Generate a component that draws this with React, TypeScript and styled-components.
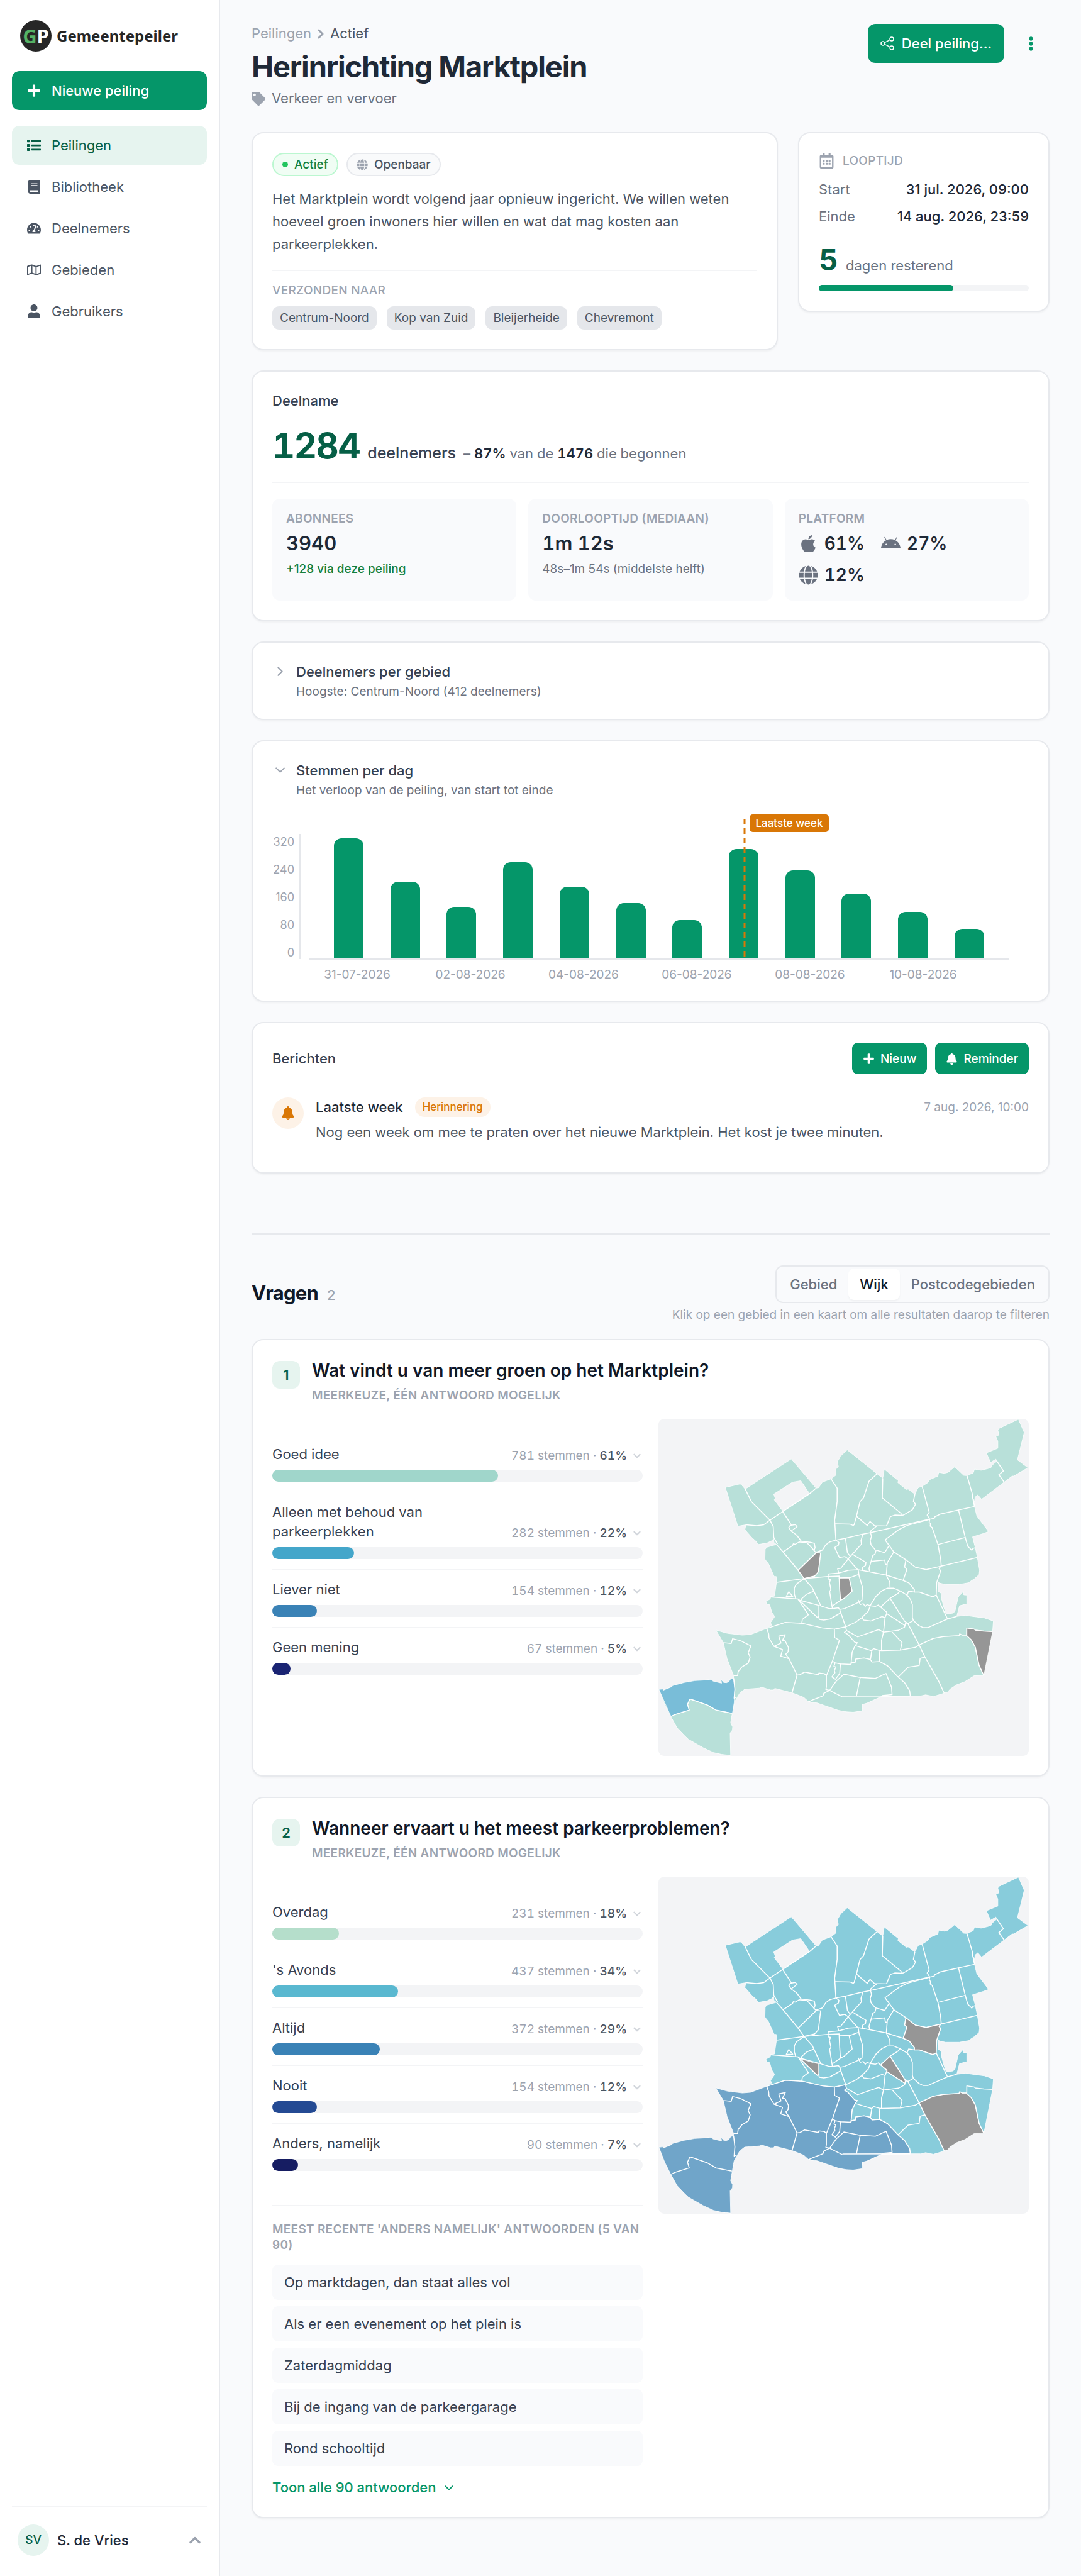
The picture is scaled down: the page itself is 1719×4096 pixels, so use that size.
import React, { useState } from "react";
import styled, { createGlobalStyle } from "styled-components";
import {
  FaPlus, FaList, FaBook, FaTachometerAlt, FaRegMap, FaUser, FaTag, FaGlobe,
  FaApple, FaAndroid, FaBell, FaRegCalendarAlt, FaEllipsisV,
} from "react-icons/fa";
import { ChevronRight, ChevronDown, ChevronUp } from "lucide-react";

const c = {
  green: "#059669",
  deep: "#065f46",
  mint: "#e6f4ef",
  ink: "#111827",
  strong: "#1f2937",
  body: "#374151",
  text: "#4b5563",
  muted: "#6b7280",
  faint: "#9ca3af",
  pale: "#d1d5db",
  line: "#e7e9ed",
  soft: "#f3f4f6",
  page: "#f9fafc",
  orange: "#d97706",
  peach: "#fdf2e7",
};

const GlobalStyle = createGlobalStyle`
  *, *::before, *::after { box-sizing: border-box; }
  body {
    margin: 0;
    background: ${c.page};
    color: ${c.body};
    font: 400 22px/31px Inter, "Liberation Sans", sans-serif;
  }
  h1, h2, h3, p, ul, dl, dd { margin: 0; padding: 0; }
  ul { list-style: none; }
  button { font: inherit; border: 0; margin: 0; padding: 0; background: none; color: inherit; cursor: pointer; text-align: left; }
  a { color: inherit; text-decoration: none; }
  svg { display: block; flex: none; }
`;

/* ---------- shell ---------- */

const Shell = styled.div`
  display: flex;
  min-height: 100vh;
`;

const Sidebar = styled.aside`
  flex: 0 0 350px;
  display: flex;
  flex-direction: column;
  padding: 32px 19px 24px;
  background: #fff;
  border-right: 2px solid ${c.line};
`;

const Brand = styled.a`
  display: flex;
  align-items: center;
  gap: 8px;
  margin: 0 13px 31px;
  font: 700 24px/50px "Noto Sans", sans-serif;
  color: #262626;
`;

const BrandMark = styled.span`
  display: flex;
  align-items: center;
  justify-content: center;
  width: 50px;
  height: 50px;
  border-radius: 50%;
  background: #262626;
  color: #fff;
  font-size: 31px;
`;

const BrandLead = styled.span`
  color: #54b265;
`;

const NewPoll = styled.button`
  display: flex;
  align-items: center;
  gap: 13px;
  height: 62px;
  padding: 0 19px;
  border-radius: 12px;
  background: ${c.green};
  color: #fff;
  font-weight: 500;
`;

const IconSlot = styled.span`
  display: flex;
  justify-content: center;
  width: 31px;
`;

const Nav = styled.nav`
  display: flex;
  flex-direction: column;
  gap: 4px;
  margin-top: 25px;
`;

const NavItem = styled.a<{ $active?: boolean }>`
  display: flex;
  align-items: center;
  gap: 13px;
  height: 62px;
  padding: 0 19px;
  border-radius: 12px;
  background: ${(p) => (p.$active ? c.mint : "transparent")};
  color: ${(p) => (p.$active ? c.deep : c.text)};
`;

const Account = styled.div`
  margin-top: auto;
  padding-top: 19px;
  border-top: 2px solid ${c.soft};
`;

const AccountButton = styled.button`
  display: flex;
  align-items: center;
  gap: 13px;
  width: 100%;
  padding: 9px 5px 9px 9px;
  color: ${c.strong};
  font-weight: 500;
  svg { margin-left: auto; color: ${c.faint}; }
`;

const Initials = styled.span`
  width: 50px;
  border-radius: 50%;
  background: ${c.mint};
  color: ${c.deep};
  font-size: 19px;
  font-weight: 500;
  line-height: 50px;
  text-align: center;
`;

const Main = styled.main`
  flex: 1;
  min-width: 0;
  padding: 38px 50px 93px;
`;

/* ---------- page header ---------- */

const PageHeader = styled.header`
  display: flex;
  justify-content: space-between;
  margin-bottom: 38px;
`;

const Crumbs = styled.nav`
  display: flex;
  align-items: center;
  gap: 3px;
  color: ${c.faint};
`;

const CrumbHere = styled.span`
  color: ${c.text};
`;

const Title = styled.h1`
  margin-top: 9px;
  font-size: 47px;
  font-weight: 700;
  line-height: 56px;
  letter-spacing: -0.025em;
  color: ${c.strong};
`;

const Topic = styled.p`
  display: flex;
  align-items: center;
  gap: 10px;
  margin-top: 7px;
  color: ${c.muted};
  svg { color: ${c.faint}; }
`;

const HeaderActions = styled.div`
  display: flex;
  align-items: flex-start;
  gap: 12px;
`;

const ShareButton = styled.button`
  display: flex;
  align-items: center;
  gap: 12px;
  height: 62px;
  padding: 0 20px;
  border-radius: 12px;
  background: ${c.green};
  color: #fff;
  font-weight: 500;
`;

const MoreButton = styled.button`
  display: flex;
  align-items: center;
  justify-content: center;
  width: 60px;
  height: 62px;
  color: ${c.green};
`;

/* ---------- cards ---------- */

const Card = styled.section`
  padding: 31px;
  border: 2px solid ${c.line};
  border-radius: 19px;
  background: #fff;
  box-shadow: 0 2px 3px rgba(0, 0, 0, 0.04);
`;

const Stack = styled.div`
  display: flex;
  flex-direction: column;
  gap: 32px;
`;

const Overview = styled.div`
  display: grid;
  grid-template-columns: minmax(0, 1fr) 400px;
  align-items: start;
  gap: 32px;
`;

const Label = styled.div<{ $light?: boolean }>`
  font-size: 19px;
  font-weight: ${(p) => (p.$light ? 500 : 600)};
  line-height: 25px;
  letter-spacing: 0.015em;
  text-transform: uppercase;
  color: ${c.faint};
`;

const Badges = styled.div`
  display: flex;
  gap: 13px;
`;

const Badge = styled.span<{ $live?: boolean }>`
  display: flex;
  align-items: center;
  gap: 10px;
  padding: 4px 14px;
  border: 2px solid ${(p) => (p.$live ? "#bbf7d0" : c.line)};
  border-radius: 19px;
  background: ${(p) => (p.$live ? "#f0fdf4" : "#f9fafb")};
  color: ${(p) => (p.$live ? "#15803d" : c.text)};
  font-size: 19px;
  font-weight: 500;
  line-height: 25px;
  svg { color: ${c.faint}; }
`;

const Dot = styled.span`
  width: 9px;
  height: 9px;
  border-radius: 50%;
  background: #22c55e;
`;

const Intro = styled.p`
  margin: 18px 0 23px;
  line-height: 36px;
  color: ${c.text};
`;

const SentTo = styled.div`
  padding-top: 18px;
  border-top: 2px solid ${c.soft};
`;

const Chips = styled.ul`
  display: flex;
  flex-wrap: wrap;
  gap: 16px;
  margin-top: 13px;
`;

const Chip = styled.li`
  padding: 6px 12px;
  border-radius: 11px;
  background: #e5e7eb;
  color: ${c.text};
  font-size: 19px;
  line-height: 25px;
`;

const TermHead = styled.div`
  display: flex;
  align-items: center;
  gap: 13px;
  margin-bottom: 18px;
  color: ${c.faint};
`;

const Term = styled.dl`
  display: flex;
  flex-direction: column;
  gap: 12px;
`;

const TermRow = styled.div`
  display: flex;
  justify-content: space-between;
  color: ${c.muted};
  dd { color: ${c.strong}; font-weight: 500; }
`;

const Remaining = styled.p`
  display: flex;
  align-items: baseline;
  gap: 13px;
  margin: 25px 0 12px;
  color: ${c.muted};
  strong { font-size: 47px; line-height: 56px; color: ${c.deep}; }
`;

const Meter = styled.div<{ $thick?: boolean }>`
  height: ${(p) => (p.$thick ? 19 : 10)}px;
  border-radius: 10px;
  background: ${c.soft};
`;

const MeterFill = styled.div`
  height: 100%;
  border-radius: 10px;
`;

const CardTitle = styled.h2`
  font-size: 22px;
  font-weight: 500;
  line-height: 31px;
  color: ${c.body};
`;

const Total = styled.p`
  display: flex;
  align-items: baseline;
  gap: 12px;
  margin: 25px 0 26px;
  font-size: 25px;
  font-weight: 500;
`;

const TotalNumber = styled.strong`
  font-size: 56px;
  font-weight: 700;
  line-height: 62px;
  letter-spacing: -0.025em;
  color: ${c.deep};
  font-variant-numeric: tabular-nums;
`;

const TotalNote = styled.span`
  font-size: 22px;
  font-weight: 400;
  color: ${c.muted};
  font-variant-numeric: tabular-nums;
  strong { font-weight: 600; color: ${c.strong}; }
`;

const Stats = styled.div`
  display: grid;
  grid-template-columns: repeat(3, minmax(0, 1fr));
  gap: 19px;
  padding-top: 25px;
  border-top: 2px solid ${c.soft};
`;

const Stat = styled.div`
  padding: 19px 22px;
  border-radius: 12px;
  background: ${c.page};
`;

const StatValue = styled.div`
  margin: 5px 0 6px;
  font-size: 31px;
  font-weight: 600;
  line-height: 44px;
  color: ${c.strong};
  font-variant-numeric: tabular-nums;
`;

const StatNote = styled.div<{ $up?: boolean }>`
  font-size: 19px;
  font-weight: ${(p) => (p.$up ? 500 : 400)};
  line-height: 25px;
  color: ${(p) => (p.$up ? "#15803d" : c.muted)};
`;

const Platforms = styled.ul`
  display: flex;
  flex-wrap: wrap;
  gap: 6px 26px;
  margin-top: 5px;
`;

const Platform = styled.li`
  display: flex;
  align-items: center;
  gap: 10px;
  font-size: 28px;
  font-weight: 600;
  line-height: 44px;
  color: ${c.strong};
  font-variant-numeric: tabular-nums;
  svg { color: ${c.muted}; }
`;

const Fold = styled.button`
  display: flex;
  gap: 13px;
  width: 100%;
  svg { margin-top: 2px; color: ${c.faint}; }
`;

const FoldTitle = styled.span`
  display: block;
  font-weight: 500;
  color: ${c.body};
`;

const FoldNote = styled.span`
  display: block;
  margin-top: 3px;
  font-size: 19px;
  line-height: 25px;
  color: ${c.muted};
`;

const ChartBox = styled.svg`
  width: 100%;
  height: auto;
  font-family: Inter, sans-serif;
`;

/* ---------- messages ---------- */

const SplitRow = styled.div`
  display: flex;
  align-items: center;
  justify-content: space-between;
`;

const ButtonGroup = styled.div`
  display: flex;
  gap: 13px;
`;

const SmallButton = styled.button`
  display: flex;
  align-items: center;
  gap: 9px;
  height: 50px;
  padding: 0 17px;
  border-radius: 9px;
  background: ${c.green};
  color: #fff;
  font-size: 19px;
  font-weight: 500;
`;

const Message = styled.article`
  display: flex;
  gap: 19px;
  margin-top: 19px;
  padding: 18px 0 15px;
`;

const MessageIcon = styled.span`
  display: flex;
  flex: none;
  align-items: center;
  justify-content: center;
  width: 50px;
  height: 50px;
  border-radius: 50%;
  background: ${c.peach};
  color: ${c.orange};
`;

const MessageBody = styled.div`
  flex: 1;
  color: ${c.text};
  line-height: 36px;
  p { margin-top: 6px; }
`;

const MessageHead = styled.div`
  display: flex;
  align-items: center;
  gap: 19px;
  line-height: 31px;
  h3 { font-size: 22px; font-weight: 500; color: ${c.strong}; }
  time { margin-left: auto; font-size: 19px; color: ${c.faint}; }
`;

const Tag = styled.span`
  padding: 0 12px;
  border-radius: 16px;
  background: ${c.peach};
  color: ${c.orange};
  font-size: 17px;
  font-weight: 500;
`;

/* ---------- questions ---------- */

const QuestionsHeader = styled.div`
  display: flex;
  align-items: center;
  justify-content: space-between;
  margin: 95px 0 26px;
  padding-top: 49px;
  border-top: 2px solid ${c.line};
`;

const QuestionsTitle = styled.h2`
  display: flex;
  align-items: baseline;
  gap: 14px;
  font-size: 31px;
  font-weight: 700;
  letter-spacing: -0.025em;
  color: ${c.ink};
  span { font-size: 22px; font-weight: 500; color: ${c.faint}; }
`;

const Levels = styled.div`
  display: flex;
  flex-direction: column;
  align-items: flex-end;
  gap: 6px;
  font-size: 19px;
  line-height: 25px;
  color: ${c.faint};
`;

const Segments = styled.div`
  display: flex;
  padding: 3px;
  border: 2px solid ${c.line};
  border-radius: 12px;
`;

const Segment = styled.button<{ $on: boolean }>`
  padding: 0 18px;
  border-radius: 9px;
  background: ${(p) => (p.$on ? "#fff" : "transparent")};
  box-shadow: ${(p) => (p.$on ? "0 2px 3px rgba(0, 0, 0, 0.04)" : "none")};
  color: ${(p) => (p.$on ? c.ink : c.muted)};
  font-size: 22px;
  font-weight: 500;
  line-height: 50px;
`;

const QuestionHead = styled.div`
  display: flex;
  align-items: flex-start;
  gap: 19px;
  margin-bottom: 25px;
`;

const QuestionNumber = styled.span`
  flex: none;
  width: 44px;
  margin-top: 2px;
  border-radius: 12px;
  background: ${c.mint};
  color: ${c.deep};
  font-weight: 600;
  line-height: 44px;
  text-align: center;
`;

const QuestionTitle = styled.h3`
  margin-bottom: 9px;
  font-size: 28px;
  font-weight: 600;
  line-height: 35px;
  color: ${c.ink};
`;

const Results = styled.div`
  display: grid;
  grid-template-columns: repeat(2, minmax(0, 1fr));
  align-items: start;
  gap: 25px;
`;

const Answers = styled.ul`
  padding-top: 25px;
`;

const Answer = styled.li`
  padding: 16px 0;
  & + & { border-top: 1px solid ${c.soft}; }
`;

const AnswerHead = styled.button`
  display: flex;
  align-items: flex-end;
  justify-content: space-between;
  gap: 25px;
  width: 100%;
  margin-bottom: 9px;
`;

const Votes = styled.span`
  display: flex;
  flex: none;
  align-items: center;
  gap: 7px;
  font-size: 19px;
  line-height: 27px;
  color: ${c.faint};
  font-variant-numeric: tabular-nums;
  strong { font-weight: 500; color: ${c.text}; }
  svg { color: ${c.pale}; }
`;

const OpenAnswers = styled.div`
  margin-top: 38px;
  padding-top: 24px;
  border-top: 2px solid ${c.soft};
`;

const Quotes = styled.ul`
  display: flex;
  flex-direction: column;
  gap: 10px;
  margin: 19px 0;
`;

const Quote = styled.li`
  padding: 13px 19px 12px;
  border-radius: 9px;
  background: ${c.page};
`;

const ShowAll = styled.button`
  display: flex;
  align-items: center;
  gap: 9px;
  color: ${c.green};
  font-weight: 500;
`;

const MapBox = styled.svg`
  width: 100%;
  height: auto;
  border-radius: 9px;
  background: ${c.soft};
`;

/* ---------- data ---------- */

const nav = [
  { icon: FaList, label: "Peilingen", active: true },
  { icon: FaBook, label: "Bibliotheek" },
  { icon: FaTachometerAlt, label: "Deelnemers" },
  { icon: FaRegMap, label: "Gebieden" },
  { icon: FaUser, label: "Gebruikers" },
];

const votesPerDay = [191, 122, 82, 153, 114, 88, 61, 174, 140, 103, 74, 47];
const dayLabels = ["31-07-2026", "02-08-2026", "04-08-2026", "06-08-2026", "08-08-2026", "10-08-2026"];

type Result = { label: string; votes: number; share: number; color: string };

const greenResults: Result[] = [
  { label: "Goed idee", votes: 781, share: 61, color: "#a0d6cb" },
  { label: "Alleen met behoud van parkeerplekken", votes: 282, share: 22, color: "#44a6ca" },
  { label: "Liever niet", votes: 154, share: 12, color: "#3a82b6" },
  { label: "Geen mening", votes: 67, share: 5, color: "#1a2473" },
];

const parkingResults: Result[] = [
  { label: "Overdag", votes: 231, share: 18, color: "#b5decb" },
  { label: "'s Avonds", votes: 437, share: 34, color: "#59b8d0" },
  { label: "Altijd", votes: 372, share: 29, color: "#3a82b6" },
  { label: "Nooit", votes: 154, share: 12, color: "#244a93" },
  { label: "Anders, namelijk", votes: 90, share: 7, color: "#161d62" },
];

const quotes = [
  "Op marktdagen, dan staat alles vol",
  "Als er een evenement op het plein is",
  "Zaterdagmiddag",
  "Bij de ingang van de parkeergarage",
  "Rond schooltijd",
];

/* ---------- map geometry ---------- */

const southWestCoast =
  "1025,1250 912,1251 852,1281 832,1287 834,1314 797,1320 768,1318 738,1312 653,1280 620,1276 600,1256 570,1243 553,1236 484,1217 480,1224 467,1224 432,1212 424,1216 364,1221 345,1237 333,1258 322,1280 315,1322 308,1366 316,1383 315,1397 306,1410 308,1506 272,1502 240,1494 198,1473 140,1437 125,1422 95,1388 70,1340 45,1286 22,1222 37,1220 40,1225 74,1210 75,1206 123,1192 165,1184 230,1180 238,1186 272,1195 270,1178 280,1192 292,1193 301,1188 309,1175 320,1173 320,1162 294,1090 279,1020 249,966 295,980 355,988 388,985 452,959";

const land =
  "M287,351 346,336 352,340 366,358 550,228 649,354 659,352 674,328 709,314 728,298 728,272 738,262 734,240 747,216 773,189 892,292 915,311 921,272 977,322 975,330 1009,360 1016,358 1043,380 1056,352 1072,346 1095,330 1101,318 1135,302 1138,286 1160,290 1175,286 1202,262 1238,299 1251,300 1276,288 1281,272 1307,277 1334,270 1348,264 1350,256 1370,238 1366,229 1345,243 1328,202 1374,182 1374,152 1366,131 1378,125 1374,104 1378,97 1456,57 1479,114 1452,232 1494,266 1437,302 1431,302 1399,328 1309,402 1294,383 1283,393 1281,412 1273,392 1281,433 1290,474 1337,541 1315,550 1273,564 1284,611 1292,652 1301,708 1299,727 1280,745 1256,762 1220,769 1165,769 1140,763 1137,758 1135,800 1147,806 1149,830 1158,866 1168,897 1195,893 1203,885 1216,823 1236,800 1238,814 1250,815 1250,853 1221,861 1210,907 1245,903 1321,914 1356,927 1353,972 1318,1162 1279,1163 1243,1188 1209,1202 1184,1220 1173,1233 1160,1238 1117,1252 1086,1245 1065,1250 " +
  southWestCoast +
  " 472,944 467,934 484,908 472,888 464,857 453,855 449,842 466,832 468,823 483,820 491,760 490,735 482,735 457,675 453,673 445,660 446,618 452,609 491,597 481,588 480,572 470,582 454,590 419,597 410,584 392,566 365,533 369,512 337,518Z M480,380 555,328 588,322 623,378 516,453 482,404 487,401Z";

const borders = [
  "366,358 391,412 465,492", "369,512 412,516 440,512 465,492 516,455 623,378 649,354",
  "465,492 478,520 480,566 495,595", "491,597 518,630 577,708 601,744 634,784 640,798 668,862",
  "516,455 551,514 543,517 540,524 549,539 571,556 590,583 625,587 642,592 645,611 640,624",
  "551,514 566,511 573,520 549,539", "518,628 555,602 558,594 565,596 581,586 612,589 622,600 648,631",
  "577,708 650,632 667,634 658,715 643,733 601,744",
  "650,630 674,621 688,598 703,586 728,578 766,570 828,554 866,546 1099,488",
  "709,314 733,354 733,412 723,492 728,578",
  "725,508 784,509 797,515 801,511 810,475 824,412 838,396 860,324 892,292",
  "810,475 853,515 864,498 882,516 930,517 945,477 964,470 990,471 997,470 1033,447 1046,423 1037,411 1043,380",
  "915,311 913,396 988,463 988,471", "866,546 868,537 890,518",
  "1072,346 1100,458 1092,470 1102,488 1120,484 1122,478 1144,466 1217,448 1281,433",
  "1251,300 1272,378 1273,392 1281,433", "1217,448 1244,567 1254,605 1270,622 1275,614 1284,611",
  "1135,597 1244,567", "1102,488 1100,503 1106,506 1104,518 1112,524 1135,597 1146,660 1148,690 1292,653",
  "1099,490 1012,515 980,532 924,577 959,629 1010,665 1045,695 1088,705 1148,690",
  "1148,690 1139,700 1146,710 1130,761 1128,815 1117,821 1111,821 1061,802 1041,802", "1128,815 1173,918",
  "1210,907 1173,918 1096,955 1075,955 1058,946 1037,925 1033,912 1033,856 1026,835 1012,815 984,797 958,785 934,785 912,796 888,820 866,858 857,885 832,912 807,932 767,952",
  "728,578 740,588 738,600 723,610 742,653 764,649 777,659 830,595 828,580 835,554",
  "766,570 774,633 784,646", "739,720 735,702 747,700 777,659 815,706",
  "795,640 848,674 846,688 835,695 833,710", "866,546 870,562 865,580 868,598 885,620 922,632 939,604",
  "888,622 884,638 875,645 860,700 862,712", "868,670 923,664 925,682 931,682",
  "959,629 933,675 929,729", "1007,663 1002,694 1011,705 996,752",
  "697,724 739,720 779,708 817,706 848,712 929,729 996,752 1020,763 1041,792 1041,802 1018,798 1012,815",
  "491,760 601,744 697,735", "697,724 697,746 707,748 702,760 708,790 703,800 714,873",
  "697,735 741,733 741,741 783,740 817,727", "741,741 743,790 746,838 714,862", "781,742 793,798 762,828 746,838",
  "817,706 820,730 835,785 832,836 821,845 763,873 743,877",
  "817,836 825,856 837,852 845,864 852,856 866,861 885,864 897,858 907,868 932,890",
  "929,729 943,760 944,782", "907,866 944,829 975,808 984,797",
  "944,829 1002,928 1015,938 1060,1030 1083,1082 1137,1184 1160,1238", "932,896 1006,948",
  "932,890 924,912 918,975", "832,912 839,923 867,927 911,908 924,912",
  "918,975 977,967 1002,953 1006,935 1015,938 1037,925", "601,744 570,768 562,785 562,810 568,832",
  "466,823 577,832 618,900 594,920 592,936", "577,835 600,842 668,862 700,873 714,873 738,870 743,877 767,952",
  "640,798 610,812 590,832 594,840", "577,832 654,912 658,906 662,920 680,923 705,918 747,892",
  "660,862 660,908", "540,800 530,821 556,821 540,800",
  "452,959 526,933 594,937 675,957 722,962 767,952",
  "452,959 460,983 461,1000 481,1036 509,1022 500,992 526,986 515,1010 525,1012 539,1042 537,1060 528,1070 541,1090",
  "481,1036 515,1050 508,1078 541,1090 573,1160 553,1236",
  "573,1160 585,1158 603,1147 658,1158 660,1151 682,1154 690,1163",
  "722,962 723,998 742,1010 714,1100 690,1163 690,1210 688,1222 703,1226 754,1254",
  "714,1100 725,1107 746,1112 788,1114 790,1107 807,1104 807,1091 840,1086 865,1092 872,1104 903,1102 934,1120 976,1168 1003,1194 1022,1227 1025,1250",
  "788,1114 793,1060 805,1033 814,1020 803,1018 775,984 762,976 770,968 767,952",
  "770,968 815,995 898,964 918,975 910,1010 910,1054 985,1052 1046,1040 1060,1030 1116,1002 1156,994 1219,990 1222,982 1232,988 1248,988 1268,1008 1284,1040 1299,1118 1318,1162",
  "1250,988 1250,957 1280,962 1284,966 1317,970 1353,972", "805,1033 871,1055 866,1092",
  "871,1055 878,1046 903,1054 901,1102", "903,1054 910,1054", "953,975 992,1020 985,1052",
  "976,1168 1016,1126 1060,1119 1064,1088 1083,1082",
  "725,1107 720,1122 728,1125 722,1140 724,1150 712,1168 726,1178 743,1154 746,1112",
  "703,1226 730,1185 760,1156 825,1170 886,1174 928,1153 950,1213 952,1244 912,1248", "825,1170 810,1250",
  "754,1251 1025,1250", "703,1226 680,1238 676,1250 640,1265 618,1276",
  "279,1020 310,1024 316,1003 348,1012 389,1034 378,1064 386,1082 378,1109 352,1126 338,1145 336,1162 320,1162",
  "320,1173 325,1220 322,1260 328,1256", "70,1338 84,1331 143,1311 136,1286 146,1263 213,1288 250,1311 313,1325",
  "1370,238 1396,280 1378,296 1399,328",
];

type Area = { points: string; fill: string };
const grey = "#969696";

const greenAreas: Area[] = [
  { fill: "#79bdd8", points: "22,1222 37,1220 40,1225 74,1210 75,1206 123,1192 165,1184 230,1180 238,1186 272,1195 270,1178 280,1192 292,1193 301,1188 309,1175 320,1173 325,1220 322,1280 315,1325 250,1311 213,1288 146,1263 136,1286 143,1311 84,1331 70,1338" },
  { fill: grey, points: "650,632 667,634 658,715 643,733 601,744 577,708" },
  { fill: grey, points: "741,741 781,742 793,798 762,828 746,838 743,790" },
  { fill: grey, points: "1250,957 1280,962 1284,966 1317,970 1353,972 1318,1162 1299,1118 1284,1040 1268,1008 1248,988" },
];

const parkingAreas: Area[] = [
  { fill: "#70a5c9", points: southWestCoast + " 526,933 594,937 675,957 722,962 767,952 770,968 762,976 775,984 803,1018 814,1020 805,1033 793,1060 788,1114 790,1107 807,1104 807,1091 840,1086 865,1092 872,1104 903,1102 934,1120 976,1168 1003,1194 1022,1227" },
  { fill: grey, points: "1008,665 1045,695 1088,705 1148,690 1139,700 1146,710 1130,761 1128,815 1117,821 1111,821 1061,802 1041,802 1041,792 1020,763 996,752 1011,705 1002,694" },
  { fill: grey, points: "588,841 640,858 660,862 660,908 652,912" },
  { fill: grey, points: "944,829 1002,928 1006,948 932,896 909,866" },
  { fill: grey, points: "1060,1030 1116,1002 1156,994 1219,990 1222,982 1232,988 1248,988 1268,1008 1284,1040 1299,1118 1318,1162 1279,1163 1243,1188 1209,1202 1184,1220 1173,1233 1160,1238 1137,1184 1083,1082" },
];

function DistrictMap({ base, areas, title }: { base: string; areas: Area[]; title: string }) {
  return (
    <MapBox viewBox="0 0 589 536" role="img" aria-label={title}>
      <g transform="scale(0.39867 0.36877) translate(-20 -55)" stroke="#fff" strokeLinejoin="round" fill="none">
        <path d={land} fill={base} fillRule="evenodd" strokeWidth={2} />
        {areas.map((a) => (
          <polygon key={a.points} points={a.points} fill={a.fill} strokeWidth={2} />
        ))}
        {borders.map((b) => (
          <polyline key={b} points={b} strokeWidth={4} />
        ))}
      </g>
    </MapBox>
  );
}

function VotesChart() {
  const base = 255;
  return (
    <ChartBox viewBox="0 0 1203 291" role="img" aria-label="Stemmen per dag">
      <g fill={c.faint}>
        {[320, 240, 160, 80, 0].map((v, i) => (
          <text key={v} x="35" y={76 + i * 44} fontSize="18" textAnchor="end">{v}</text>
        ))}
        {dayLabels.map((d, i) => (
          <text key={d} x={135 + i * 180} y="287" fontSize="19" textAnchor="middle">{d}</text>
        ))}
      </g>
      <path d="M44 57V256M58 256H1172" stroke="#e5e7eb" strokeWidth="2" />
      {votesPerDay.map((h, i) => {
        const x = 98 + Math.round(i * 89.7);
        const top = base - h;
        return (
          <path key={i} fill={c.green}
            d={`M${x} ${base}V${top + 12}a12 12 0 0 1 12 -12h23a12 12 0 0 1 12 12V${base}z`} />
        );
      })}
      <path d="M751 33V255" stroke={c.orange} strokeWidth="3" strokeDasharray="9 6" />
      <rect x="759" y="26" width="126" height="28" rx="5" fill={c.orange} />
      <text x="822" y="46" fontSize="17" fontWeight="500" fill="#fff" textAnchor="middle">Laatste week</text>
    </ChartBox>
  );
}

function ShareIcon() {
  return (
    <svg width="22" height="22" viewBox="0 0 22 22" fill="none" stroke="currentColor" strokeWidth="1.5" aria-hidden="true">
      <circle cx="4" cy="11" r="3" />
      <circle cx="18" cy="4" r="3" />
      <circle cx="18" cy="18" r="3" />
      <path d="M6.700 9.700 15.300 5.300M6.700 12.300l8.600 4.400" />
    </svg>
  );
}

function QuestionCard(p: {
  number: number; title: string; results: Result[]; base: string; areas: Area[]; children?: React.ReactNode;
}) {
  return (
    <Card>
      <QuestionHead>
        <QuestionNumber>{p.number}</QuestionNumber>
        <div>
          <QuestionTitle>{p.title}</QuestionTitle>
          <Label>Meerkeuze, één antwoord mogelijk</Label>
        </div>
      </QuestionHead>
      <Results>
        <div>
          <Answers>
            {p.results.map((r) => (
              <Answer key={r.label}>
                <AnswerHead type="button">
                  <span>{r.label}</span>
                  <Votes>
                    <span>{r.votes} stemmen · <strong>{r.share}%</strong></span>
                    <ChevronDown size={18} strokeWidth={3} aria-hidden="true" />
                  </Votes>
                </AnswerHead>
                <Meter $thick>
                  <MeterFill style={{ width: `${r.share}%`, background: r.color }} />
                </Meter>
              </Answer>
            ))}
          </Answers>
          {p.children}
        </div>
        <DistrictMap base={p.base} areas={p.areas} title={p.title} />
      </Results>
    </Card>
  );
}

export default function App() {
  const [level, setLevel] = useState("Wijk");
  return (
    <>
      <GlobalStyle />
      <Shell>
        <Sidebar>
          <Brand href="#">
            <BrandMark><BrandLead>G</BrandLead>P</BrandMark>
            Gemeentepeiler
          </Brand>
          <NewPoll type="button">
            <IconSlot><FaPlus size={22} /></IconSlot>
            Nieuwe peiling
          </NewPoll>
          <Nav>
            {nav.map(({ icon: Icon, label, active }) => (
              <NavItem key={label} href="#" $active={active}>
                <IconSlot><Icon size={22} /></IconSlot>
                {label}
              </NavItem>
            ))}
          </Nav>
          <Account>
            <AccountButton type="button">
              <Initials>SV</Initials>
              S. de Vries
              <ChevronUp size={28} strokeWidth={3} />
            </AccountButton>
          </Account>
        </Sidebar>

        <Main>
          <PageHeader>
            <div>
              <Crumbs>
                <a href="#">Peilingen</a>
                <ChevronRight size={24} strokeWidth={3} />
                <CrumbHere>Actief</CrumbHere>
              </Crumbs>
              <Title>Herinrichting Marktplein</Title>
              <Topic><FaTag size={22} />Verkeer en vervoer</Topic>
            </div>
            <HeaderActions>
              <ShareButton type="button"><ShareIcon />Deel peiling...</ShareButton>
              <MoreButton type="button" aria-label="Meer acties"><FaEllipsisV size={23} /></MoreButton>
            </HeaderActions>
          </PageHeader>

          <Stack>
            <Overview>
              <Card>
                <Badges>
                  <Badge $live><Dot />Actief</Badge>
                  <Badge><FaGlobe size={18} />Openbaar</Badge>
                </Badges>
                <Intro>
                  Het Marktplein wordt volgend jaar opnieuw ingericht. We willen weten hoeveel groen
                  inwoners hier willen en wat dat mag kosten aan parkeerplekken.
                </Intro>
                <SentTo>
                  <Label $light>Verzonden naar</Label>
                  <Chips>
                    <Chip>Centrum-Noord</Chip>
                    <Chip>Kop van Zuid</Chip>
                    <Chip>Bleijerheide</Chip>
                    <Chip>Chevremont</Chip>
                  </Chips>
                </SentTo>
              </Card>
              <Card>
                <TermHead>
                  <FaRegCalendarAlt size={25} />
                  <Label $light>Looptijd</Label>
                </TermHead>
                <Term>
                  <TermRow><dt>Start</dt><dd>31 jul. 2026, 09:00</dd></TermRow>
                  <TermRow><dt>Einde</dt><dd>14 aug. 2026, 23:59</dd></TermRow>
                </Term>
                <Remaining><strong>5</strong> dagen resterend</Remaining>
                <Meter>
                  <MeterFill style={{ width: "64%", background: c.green }} />
                </Meter>
              </Card>
            </Overview>

            <Card>
              <CardTitle>Deelname</CardTitle>
              <Total>
                <TotalNumber>1284</TotalNumber>
                deelnemers
                <TotalNote>– <strong>87%</strong> van de <strong>1476</strong> die begonnen</TotalNote>
              </Total>
              <Stats>
                <Stat>
                  <Label>Abonnees</Label>
                  <StatValue>3940</StatValue>
                  <StatNote $up>+128 via deze peiling</StatNote>
                </Stat>
                <Stat>
                  <Label>Doorlooptijd (mediaan)</Label>
                  <StatValue>1m 12s</StatValue>
                  <StatNote>48s–1m 54s (middelste helft)</StatNote>
                </Stat>
                <Stat>
                  <Label>Platform</Label>
                  <Platforms>
                    <Platform><FaApple size={31} />61%</Platform>
                    <Platform><FaAndroid size={31} />27%</Platform>
                    <Platform><FaGlobe size={31} />12%</Platform>
                  </Platforms>
                </Stat>
              </Stats>
            </Card>

            <Card>
              <Fold type="button" aria-expanded={false}>
                <ChevronRight size={25} strokeWidth={2} />
                <span>
                  <FoldTitle>Deelnemers per gebied</FoldTitle>
                  <FoldNote>Hoogste: Centrum-Noord (412 deelnemers)</FoldNote>
                </span>
              </Fold>
            </Card>

            <Card>
              <Fold type="button" aria-expanded={true}>
                <ChevronDown size={25} strokeWidth={2} />
                <span>
                  <FoldTitle>Stemmen per dag</FoldTitle>
                  <FoldNote>Het verloop van de peiling, van start tot einde</FoldNote>
                </span>
              </Fold>
              <VotesChart />
            </Card>

            <Card>
              <SplitRow>
                <CardTitle>Berichten</CardTitle>
                <ButtonGroup>
                  <SmallButton type="button"><FaPlus size={19} />Nieuw</SmallButton>
                  <SmallButton type="button"><FaBell size={19} />Reminder</SmallButton>
                </ButtonGroup>
              </SplitRow>
              <Message>
                <MessageIcon><FaBell size={22} /></MessageIcon>
                <MessageBody>
                  <MessageHead>
                    <h3>Laatste week</h3>
                    <Tag>Herinnering</Tag>
                    <time dateTime="2026-08-07T10:00">7 aug. 2026, 10:00</time>
                  </MessageHead>
                  <p>Nog een week om mee te praten over het nieuwe Marktplein. Het kost je twee minuten.</p>
                </MessageBody>
              </Message>
            </Card>
          </Stack>

          <QuestionsHeader>
            <QuestionsTitle>Vragen <span>2</span></QuestionsTitle>
            <Levels>
              <Segments role="group" aria-label="Kaartniveau">
                {["Gebied", "Wijk", "Postcodegebieden"].map((l) => (
                  <Segment key={l} type="button" $on={level === l} aria-pressed={level === l} onClick={() => setLevel(l)}>
                    {l}
                  </Segment>
                ))}
              </Segments>
              <p>Klik op een gebied in een kaart om alle resultaten daarop te filteren</p>
            </Levels>
          </QuestionsHeader>

          <Stack>
            <QuestionCard number={1} title="Wat vindt u van meer groen op het Marktplein?"
              results={greenResults} base="#b8e0d9" areas={greenAreas} />
            <QuestionCard number={2} title="Wanneer ervaart u het meest parkeerproblemen?"
              results={parkingResults} base="#88ccdb" areas={parkingAreas}>
              <OpenAnswers>
                <Label>Meest recente 'anders namelijk' antwoorden (5 van 90)</Label>
                <Quotes>
                  {quotes.map((q) => <Quote key={q}>{q}</Quote>)}
                </Quotes>
                <ShowAll type="button">
                  Toon alle 90 antwoorden
                  <ChevronDown size={22} strokeWidth={2} />
                </ShowAll>
              </OpenAnswers>
            </QuestionCard>
          </Stack>
        </Main>
      </Shell>
    </>
  );
}
